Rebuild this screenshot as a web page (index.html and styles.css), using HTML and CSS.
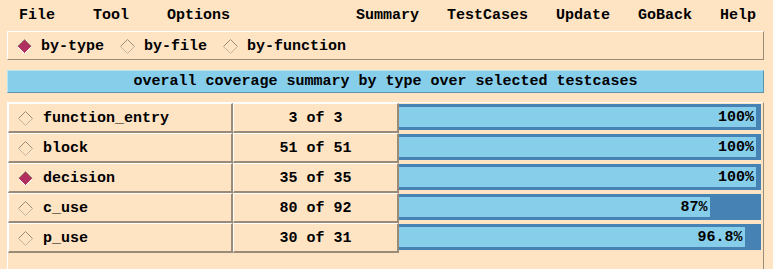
FILE: index.html
```html
<html>
  <head>
    <title>Coverage Summary</title>
    <link rel="stylesheet" href="styles.css">
  </head>
  <body>
    <div class="menubar">
      <div class="menu-left">
        <span>File</span>
        <span>Tool</span>
        <span>Options</span>
      </div>
      <div class="menu-right">
        <span>Summary</span>
        <span>TestCases</span>
        <span>Update</span>
        <span>GoBack</span>
        <span>Help</span>
      </div>
    </div>

    <div class="radios">
      <div class="radio">
        <svg class="dia on" width="15" height="15" viewBox="0 0 15 15"><polygon points="7.5,0.5 14.5,7.5 7.5,14.5 0.5,7.5"/><polyline class="hi" points="0.5,7.5 7.5,0.5 14.5,7.5"/><polyline class="lo" points="0.5,7.5 7.5,14.5 14.5,7.5"/></svg>
        <span>by-type</span>
      </div>
      <div class="radio">
        <svg class="dia" width="15" height="15" viewBox="0 0 15 15"><polygon points="7.5,0.5 14.5,7.5 7.5,14.5 0.5,7.5"/><polyline class="hi" points="0.5,7.5 7.5,0.5 14.5,7.5"/><polyline class="lo" points="0.5,7.5 7.5,14.5 14.5,7.5"/></svg>
        <span>by-file</span>
      </div>
      <div class="radio">
        <svg class="dia" width="15" height="15" viewBox="0 0 15 15"><polygon points="7.5,0.5 14.5,7.5 7.5,14.5 0.5,7.5"/><polyline class="hi" points="0.5,7.5 7.5,0.5 14.5,7.5"/><polyline class="lo" points="0.5,7.5 7.5,14.5 14.5,7.5"/></svg>
        <span>by-function</span>
      </div>
    </div>

    <div class="header">overall coverage summary by type over selected testcases</div>

    <div class="table">
      <div class="row">
        <div class="cell label">
          <svg class="dia" width="15" height="15" viewBox="0 0 15 15"><polygon points="7.5,0.5 14.5,7.5 7.5,14.5 0.5,7.5"/><polyline class="hi" points="0.5,7.5 7.5,0.5 14.5,7.5"/><polyline class="lo" points="0.5,7.5 7.5,14.5 14.5,7.5"/></svg>
          <span>function_entry</span>
        </div>
        <div class="cell count">3 of 3</div>
        <div class="bar"><div class="fill" style="width: 100%">100%</div></div>
      </div>
      <div class="row">
        <div class="cell label">
          <svg class="dia" width="15" height="15" viewBox="0 0 15 15"><polygon points="7.5,0.5 14.5,7.5 7.5,14.5 0.5,7.5"/><polyline class="hi" points="0.5,7.5 7.5,0.5 14.5,7.5"/><polyline class="lo" points="0.5,7.5 7.5,14.5 14.5,7.5"/></svg>
          <span>block</span>
        </div>
        <div class="cell count">51 of 51</div>
        <div class="bar"><div class="fill" style="width: 100%">100%</div></div>
      </div>
      <div class="row">
        <div class="cell label">
          <svg class="dia on" width="15" height="15" viewBox="0 0 15 15"><polygon points="7.5,0.5 14.5,7.5 7.5,14.5 0.5,7.5"/><polyline class="hi" points="0.5,7.5 7.5,0.5 14.5,7.5"/><polyline class="lo" points="0.5,7.5 7.5,14.5 14.5,7.5"/></svg>
          <span>decision</span>
        </div>
        <div class="cell count">35 of 35</div>
        <div class="bar"><div class="fill" style="width: 100%">100%</div></div>
      </div>
      <div class="row">
        <div class="cell label">
          <svg class="dia" width="15" height="15" viewBox="0 0 15 15"><polygon points="7.5,0.5 14.5,7.5 7.5,14.5 0.5,7.5"/><polyline class="hi" points="0.5,7.5 7.5,0.5 14.5,7.5"/><polyline class="lo" points="0.5,7.5 7.5,14.5 14.5,7.5"/></svg>
          <span>c_use</span>
        </div>
        <div class="cell count">80 of 92</div>
        <div class="bar"><div class="fill" style="width: 87%">87%</div></div>
      </div>
      <div class="row">
        <div class="cell label">
          <svg class="dia" width="15" height="15" viewBox="0 0 15 15"><polygon points="7.5,0.5 14.5,7.5 7.5,14.5 0.5,7.5"/><polyline class="hi" points="0.5,7.5 7.5,0.5 14.5,7.5"/><polyline class="lo" points="0.5,7.5 7.5,14.5 14.5,7.5"/></svg>
          <span>p_use</span>
        </div>
        <div class="cell count">30 of 31</div>
        <div class="bar"><div class="fill" style="width: 96.8%">96.8%</div></div>
      </div>
    </div>
  </body>
</html>
```

FILE: styles.css
```css
body {
  margin: 0;
  background-color: #FFE4C4;
  font-family: "Liberation Mono", "DejaVu Sans Mono", monospace;
  font-weight: bold;
  font-size: 15px;
  color: #000;
  overflow: hidden;
}
.menubar {
  display: flex;
  justify-content: space-between;
  align-items: center;
  box-sizing: border-box;
  height: 28px;
  padding: 2px 17px 0 19px;
}
.menu-left {
  display: flex;
  gap: 38px;
}
.menu-right {
  display: flex;
  gap: 28px;
}
.radios {
  display: flex;
  align-items: center;
  gap: 16px;
  box-sizing: border-box;
  height: 29px;
  margin: 3px 9px 0 7px;
  padding: 1px 0 0 9px;
  border: 1px solid;
  border-color: #FFFFFF #9A8A78 #9A8A78 #FFFFFF;
}
.radio {
  display: flex;
  align-items: center;
  gap: 9px;
}
.dia {
  display: block;
}
.dia polygon {
  fill: none;
}
.dia.on polygon {
  fill: #B03060;
}
.dia .hi {
  fill: none;
  stroke: #9A8A78;
}
.dia .lo {
  fill: none;
  stroke: #C4B4A0;
}
.dia.on .lo {
  stroke: #FFFFFF;
}
.header {
  margin: 10px 9px 0 7px;
  height: 20px;
  padding-top: 1px;
  line-height: 20px;
  text-align: center;
  background-color: #87CEEB;
  border: 1px solid;
  border-color: #B8E4F4 #5F93A8 #5F93A8 #B8E4F4;
}
.table {
  margin: 9px 9px 0 7px;
  height: 167px;
  box-sizing: border-box;
  border-top: 1px solid #FFFFFF;
  border-left: 1px solid #FFFFFF;
  border-right: 1px solid #9A8A78;
}
.row {
  display: flex;
  height: 30px;
}
.cell {
  box-sizing: border-box;
  height: 30px;
  padding-top: 1px;
  border-top: 1px solid #FFFFFF;
  border-left: 1px solid #FFFFFF;
  border-right: 2px solid #9A8A78;
  border-bottom: 2px solid #9A8A78;
}
.label {
  width: 225px;
  display: flex;
  align-items: center;
  gap: 10px;
  padding-left: 9px;
}
.count {
  width: 166px;
  display: flex;
  align-items: center;
  justify-content: center;
  white-space: pre;
}
.bar {
  box-sizing: border-box;
  width: 362px;
  height: 26px;
  margin-top: 1px;
  padding: 3px 5px 3px 0;
  background-color: #4682B4;
}
.fill {
  box-sizing: border-box;
  height: 20px;
  line-height: 20px;
  padding: 1px 2px 0 0;
  text-align: right;
  white-space: nowrap;
  background-color: #87CEEB;
}
```
